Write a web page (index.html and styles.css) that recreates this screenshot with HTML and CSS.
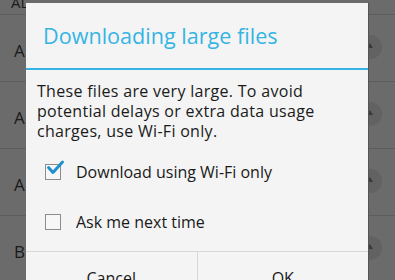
FILE: index.html
```html
<!DOCTYPE html>
<html>
<head>
<meta charset="utf-8">
<link rel="stylesheet" href="styles.css">
</head>
<body>
<div class="screen">
  <div class="list">
    <div class="header">AL</div>
    <div class="row"><span class="letter">A</span><span class="dl"><span class="arrow"></span></span></div>
    <div class="row"><span class="letter">A</span><span class="dl"><span class="arrow"></span></span></div>
    <div class="row"><span class="letter">A</span><span class="dl"><span class="arrow"></span></span></div>
    <div class="row"><span class="letter">B</span><span class="dl"><span class="arrow"></span></span></div>
  </div>
  <div class="dialog">
    <div class="title">Downloading large files</div>
    <div class="body">
      <p class="msg">These files are very large. To avoid potential delays or extra data usage charges, use Wi-Fi only.</p>
      <div class="opt">
        <span class="box">
          <svg width="22" height="22" viewBox="0 0 22 22"><path d="M2.5 8.5 L7 13.5 L16.5 3" fill="none" stroke="#1e8fd0" stroke-width="3" stroke-linecap="round" stroke-linejoin="round"/></svg>
        </span>
        <span class="label">Download using Wi-Fi only</span>
      </div>
      <div class="opt">
        <span class="box"></span>
        <span class="label">Ask me next time</span>
      </div>
    </div>
    <div class="buttons">
      <div class="btn">Cancel</div>
      <div class="btn">OK</div>
    </div>
  </div>
</div>
</body>
</html>
```
FILE: styles.css
```css
html, body {
  margin: 0;
  padding: 0;
}
body {
  width: 395px;
  height: 280px;
  overflow: hidden;
  background: #6b6b6b;
  font-family: "Open Sans", "Noto Sans", sans-serif;
}
.screen {
  position: relative;
  width: 395px;
  height: 280px;
  overflow: hidden;
}
.list {
  display: flex;
  flex-direction: column;
}
.header {
  height: 14px;
  border-bottom: 1px solid #5d5d5d;
  color: #1a1a1a;
  font-size: 15px;
  line-height: 4px;
  padding-left: 11px;
  overflow: hidden;
}
.row {
  height: 62px;
  border-bottom: 1px solid #5d5d5d;
  display: flex;
  align-items: center;
  justify-content: space-between;
  padding: 4px 13px 0 14px;
  box-sizing: content-box;
}
.row:first-of-type {
  height: 60px;
}
.letter {
  color: #1a1a1a;
  font-size: 17px;
}
.dl {
  position: relative;
  width: 24px;
  height: 24px;
  margin-top: -6px;
  border-radius: 50%;
  background: #626262;
}
.arrow {
  position: absolute;
  left: 9px;
  top: 8px;
  width: 0;
  height: 0;
  border-left: 3px solid transparent;
  border-right: 3px solid transparent;
  border-bottom: 5px solid #3a3a3a;
}
.dialog {
  position: absolute;
  left: 26px;
  top: 3px;
  width: 342px;
  height: 290px;
  background: #f4f4f4;
  border-right: 1px solid #555;
  display: flex;
  flex-direction: column;
}
.title {
  height: 67px;
  box-sizing: border-box;
  border-bottom: 2px solid #35b4e4;
  color: #35b4e4;
  font-size: 21.6px;
  padding: 20px 0 0 17px;
  line-height: 26px;
}
.body {
  padding: 11px 0 0 11px;
  height: 182px;
  box-sizing: border-box;
  border-bottom: 1px solid #d8d8d8;
}
.msg {
  margin: 0;
  width: 300px;
  font-size: 16px;
  letter-spacing: 0.3px;
  line-height: 20px;
  color: #1a1a1a;
}
.opt {
  display: flex;
  align-items: center;
  height: 50px;
}
.opt:first-of-type {
  margin-top: 6px;
}
.box {
  position: relative;
  width: 14px;
  height: 14px;
  border: 1px solid #8c8c8c;
  margin-left: 8px;
  margin-right: 15px;
  background: #f7f7f7;
}
.box svg {
  position: absolute;
  left: 0;
  top: -6px;
}
.label {
  font-size: 16px;
  color: #1a1a1a;
}
.buttons {
  display: flex;
  flex: 1;
}
.btn {
  flex: 1;
  text-align: center;
  font-size: 16px;
  line-height: 20px;
  color: #1a1a1a;
  padding-top: 16px;
}
.btn + .btn {
  border-left: 1px solid #d8d8d8;
}
```
